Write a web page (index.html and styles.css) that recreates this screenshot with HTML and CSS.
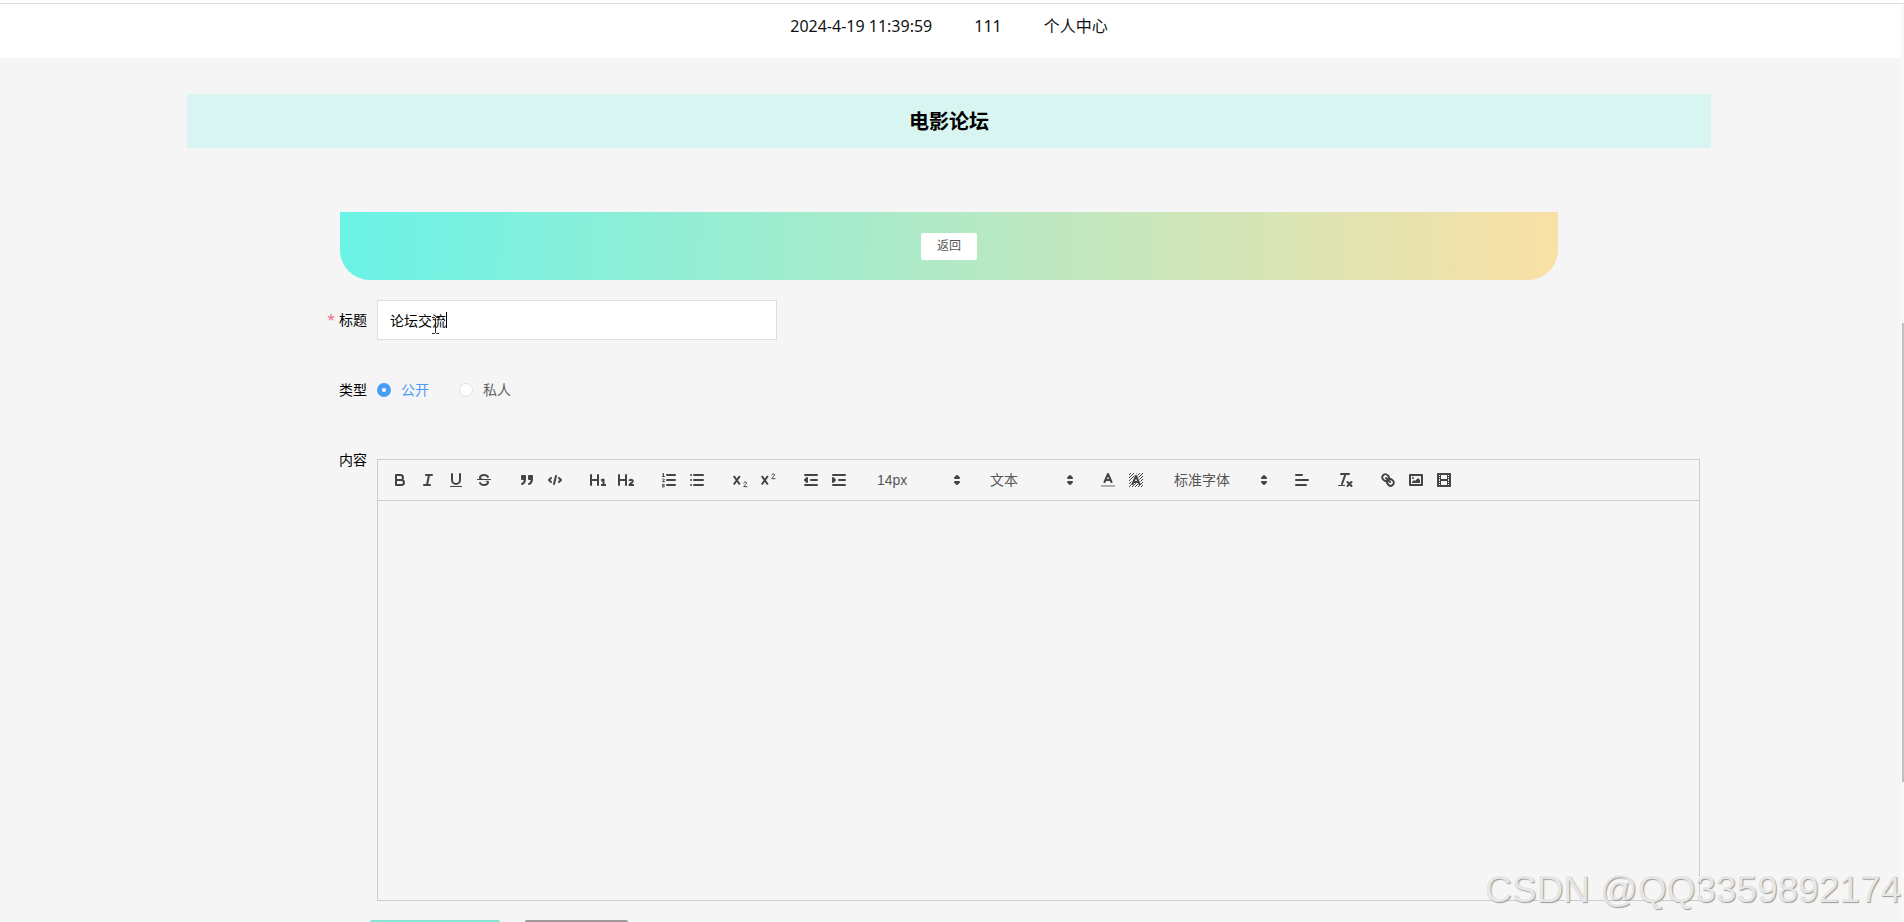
FILE: index.html
```html
<!DOCTYPE html>
<html lang="zh-CN">
<head>
<meta charset="utf-8">
<title>电影论坛</title>
<link rel="stylesheet" href="styles.css">
</head>
<body>
<header class="topbar">
  <span class="topbar-item">2024-4-19 11:39:59</span>
  <span class="topbar-item">111</span>
  <a class="topbar-item" href="#">个人中心</a>
</header>

<main class="page">
  <h1 class="page-title">电影论坛</h1>

  <div class="banner"><button class="back" type="button">返回</button></div>

  <form class="form">
    <div class="row">
      <label class="label required" for="title">标题</label>
      <div class="field">
        <input class="text" id="title" type="text" value="论坛交流">
        <span class="caret"></span>
        <svg class="pointer" viewBox="0 0 9 17"><path d="M1 .5h2.500l1 1 1-1H8M4.500 1.500v14M1 16.500h2.500l1-1 1 1H8"/></svg>
      </div>
    </div>

    <div class="row">
      <span class="label" id="kind">类型</span>
      <div class="radios" role="radiogroup" aria-labelledby="kind">
        <label class="radio"><input type="radio" name="kind" checked><span>公开</span></label>
        <label class="radio"><input type="radio" name="kind"><span>私人</span></label>
      </div>
    </div>

    <div class="row">
      <label class="label" for="content">内容</label>
      <div class="editor">
        <div class="toolbar">
          <div class="group">
            <button type="button" aria-label="粗体"><svg viewBox="0 0 18 18"><path class="s" d="M5 4h4.500a2.500 2.500 0 0 1 0 5H5zM5 9h5.500a2.500 2.500 0 0 1 0 5H5z"/></svg></button>
            <button type="button" aria-label="斜体"><svg viewBox="0 0 18 18"><path class="s" d="M7 4h6M5 14h6M8 14l2-10"/></svg></button>
            <button type="button" aria-label="下划线"><svg viewBox="0 0 18 18"><path class="s" d="M5 3v6a4 4 0 0 0 8 0V3"/><rect class="f" x="3" y="15" width="12" height="1"/></svg></button>
            <button type="button" aria-label="删除线"><svg viewBox="0 0 18 18"><path class="s t" d="M15.500 8.500h-13"/><path class="f" d="M9.007 8C6.542 7.791 6 7.519 6 6.500 6 5.792 7.283 5 9 5c1.571 0 2.765.679 2.969 1.309a1 1 0 0 0 1.900-.617C13.356 4.106 11.354 3 9 3 6.200 3 4 4.538 4 6.500a3.200 3.200 0 0 0 .5 1.843ZM8.984 10C11.457 10.208 12 10.479 12 11.500c0 .708-1.283 1.500-3 1.500-1.571 0-2.765-.679-2.969-1.309a1 1 0 1 0-1.900.617C4.644 13.894 6.646 15 9 15c2.800 0 5-1.538 5-3.500a3.200 3.200 0 0 0-.5-1.843Z"/></svg></button>
          </div>
          <div class="group">
            <button type="button" aria-label="引用"><svg viewBox="0 0 18 18"><rect class="f s" x="4" y="5" width="3" height="3"/><rect class="f s" x="11" y="5" width="3" height="3"/><path class="f s" d="M7 8c0 4.031-3 5-3 5M14 8c0 4.031-3 5-3 5"/></svg></button>
            <button type="button" aria-label="代码"><svg viewBox="0 0 18 18"><path class="s" d="M5 7 3 9l2 2M13 7l2 2-2 2M10 5l-2 8"/></svg></button>
          </div>
          <div class="group">
            <button type="button" aria-label="标题一"><svg viewBox="0 0 18 18"><path class="s" d="M2 4v10M9 4v10M9 9H2"/><path class="sb" d="M12 9.500 14.500 8.500V14M12 14h5"/></svg></button>
            <button type="button" aria-label="标题二"><svg viewBox="0 0 18 18"><path class="s" d="M2 4v10M9 4v10M9 9H2"/><path class="sb" d="M12.200 9.800c.6-1.300 3.600-1.400 3.600.4 0 1.500-2.900 2.200-3.400 3.800h4.600"/></svg></button>
          </div>
          <div class="group">
            <button type="button" aria-label="有序列表"><svg viewBox="0 0 18 18"><path class="s" d="M7 4h8M7 9h8M7 14h8"/><path class="s t" d="M2.500 5.500h2M3.500 5.500v-3L2.500 3M4.500 10.500h-2c0-.5 1.850-1 1.850-2 0-.7-1.200-.9-1.850-.3M2.500 14.600c.6-.2 1.900-.2 1.900-.9s-1.200-.8-1.900-.4M2.500 15.900c.8.300 2 .2 2-.6 0-.5-.4-.7-1-.7"/></svg></button>
            <button type="button" aria-label="无序列表"><svg viewBox="0 0 18 18"><path class="s" d="M6 4h9M6 9h9M6 14h9M3 4v0M3 9v0M3 14v0"/></svg></button>
          </div>
          <div class="group">
            <button type="button" aria-label="下标"><svg viewBox="0 0 18 18"><path class="sb" d="m2.800 5 6 8.500M8.800 5l-6 8.500"/><path class="s t" d="M12.800 11.900c.1-1.600 2.900-1.300 2.700.1-.1 1.200-2.300 1.900-2.700 3.700h3.200"/></svg></button>
            <button type="button" aria-label="上标"><svg viewBox="0 0 18 18"><path class="sb" d="m2.800 5 6 8.500M8.800 5l-6 8.500"/><path class="s t" d="M12.800 3.900c.1-1.600 2.900-1.300 2.700.1-.1 1.200-2.300 1.900-2.700 3.700h3.200"/></svg></button>
          </div>
          <div class="group">
            <button type="button" aria-label="减少缩进"><svg viewBox="0 0 18 18"><path class="s" d="M3 14h12M3 4h12M9 9h6"/><path class="f s" d="M5 7v4L3 9z"/></svg></button>
            <button type="button" aria-label="增加缩进"><svg viewBox="0 0 18 18"><path class="s" d="M3 14h12M3 4h12M9 9h6"/><path class="f s" d="M3 7v4l2-2z"/></svg></button>
          </div>
          <div class="group">
            <div class="picker"><select aria-label="字号"><option>14px</option></select><svg viewBox="0 0 18 18"><path class="f s" d="m7 11 2 2 2-2zM7 7l2-2 2 2z"/></svg></div>
          </div>
          <div class="group">
            <div class="picker"><select aria-label="段落"><option>文本</option></select><svg viewBox="0 0 18 18"><path class="f s" d="m7 11 2 2 2-2zM7 7l2-2 2 2z"/></svg></div>
          </div>
          <div class="group">
            <button type="button" aria-label="文字颜色"><svg viewBox="0 0 18 18"><path class="s pale" d="M2 15h14"/><path class="s" d="M5.500 11 9 3l3.500 8M11.630 9H6.380"/></svg></button>
            <button type="button" aria-label="背景颜色"><svg viewBox="0 0 18 18"><path class="hatch" d="M2 4l2-2M2 7l5-5M2 10l8-8M2 13 13 2M2 16 16 2M5 16 16 5M8 16l8-8M11 16l5-5M14 16l2-2"/><path class="halo" d="M6 12 9 6l3 6"/><path class="s" d="M5.500 13 9 5l3.500 8M11.630 11H6.380"/></svg></button>
          </div>
          <div class="group">
            <div class="picker wide"><select aria-label="字体"><option>标准字体</option></select><svg viewBox="0 0 18 18"><path class="f s" d="m7 11 2 2 2-2zM7 7l2-2 2 2z"/></svg></div>
          </div>
          <div class="group">
            <button type="button" aria-label="对齐"><svg viewBox="0 0 18 18"><path class="s" d="M3 9h12M3 14h10M3 4h6"/></svg></button>
          </div>
          <div class="group">
            <button type="button" aria-label="清除格式"><svg viewBox="0 0 18 18"><path class="s" d="M5 3h8M6 13 9.500 3M11.500 11l4 4M15.500 11l-4 4"/><rect class="f" x="2" y="14" width="7" height="1"/></svg></button>
          </div>
          <div class="group">
            <button type="button" aria-label="链接"><svg viewBox="0 0 18 18"><path class="s" d="m7 7 4 4"/><path class="s" d="M8.900 4.577a3.476 3.476 0 0 1 .36 4.679A3.476 3.476 0 0 1 4.577 8.900C3.185 7.500 2.035 6.400 4.217 4.217S7.500 3.185 8.900 4.577ZM13.423 9.100a3.476 3.476 0 0 0-4.679-.36 3.476 3.476 0 0 0 .36 4.679c1.392 1.392 2.500 2.542 4.679.36s1.032-3.287-.36-4.679Z"/></svg></button>
            <button type="button" aria-label="图片"><svg viewBox="0 0 18 18"><rect class="s" x="3" y="4" width="12" height="10"/><circle class="f" cx="6" cy="7" r="1"/><path class="f" d="M5 12v-1l2-2 1 1 3-3 2 2v3z"/></svg></button>
            <button type="button" aria-label="视频"><svg viewBox="0 0 18 18"><rect class="s" x="3" y="3" width="12" height="12"/><path class="f" d="M5 3h1v12H5zM12 3h1v12h-1zM5 8h8v2H5zM3 5h3v1H3zM3 7h3v1H3zM3 10h3v1H3zM3 12h3v1H3zM12 5h3v1h-3zM12 7h3v1h-3zM12 10h3v1h-3zM12 12h3v1h-3z"/></svg></button>
          </div>
        </div>
        <textarea class="content" id="content"></textarea>
      </div>
    </div>

    <div class="actions">
      <button class="submit" type="submit" aria-label="提交"></button>
      <button class="cancel" type="button" aria-label="取消"></button>
    </div>
  </form>
</main>

<div class="scrollbar"><div class="thumb"></div></div>
<div class="watermark">CSDN @QQ3359892174</div>
</body>
</html>
```
FILE: styles.css
```css
* {
  box-sizing: border-box;
}

body {
  position: relative;
  height: 100vh;
  margin: 0;
  padding-right: 6px;
  overflow: hidden;
  background: #f5f5f5;
  color: #000;
  font-family: "Noto Sans", "Noto Sans CJK SC", sans-serif;
  font-size: 14px;
}

button,
input,
select,
textarea {
  font: inherit;
}

.topbar {
  display: flex;
  justify-content: center;
  height: 58px;
  margin-right: -6px;
  padding: 3px 6px 0 0;
  background: linear-gradient(#ddd, #ddd) 0 3px / 100% 1px no-repeat #fff;
  font-size: 16px;
  line-height: 46px;
}

.topbar-item {
  padding: 0 21px;
  color: #111;
  text-decoration: none;
}

.page {
  margin: 36px 187px 0;
}

.page-title {
  margin: 0;
  padding-top: 2px;
  background: #d9f5f1;
  font-size: 20px;
  font-weight: 700;
  line-height: 52px;
  text-align: center;
}

.banner {
  display: flex;
  align-items: center;
  justify-content: center;
  height: 68px;
  margin: 64px 153px 0;
  border-radius: 0 0 30px 30px;
  background: linear-gradient(91deg, #6af3e7, #fae0a5);
}

.back {
  height: 27px;
  padding: 0 16px;
  border: 0;
  border-radius: 2px;
  background: #fff;
  color: #555;
  font-size: 12px;
  line-height: 26px;
}

.form {
  margin: 20px 11px 0 130px;
}

.row {
  display: flex;
  margin-bottom: 30px;
}

.label {
  flex: none;
  width: 60px;
  padding-right: 10px;
  line-height: 40px;
  text-align: right;
}

.required::before {
  content: "*";
  margin-right: 4px;
  color: #f56c8c;
}

.field {
  position: relative;
  width: 400px;
}

.text {
  display: block;
  width: 100%;
  height: 40px;
  padding: 0 12px;
  border: 1px solid #ddd;
  background: #fff;
  color: #000;
  outline: 0;
}

.caret {
  position: absolute;
  top: 12px;
  left: 69px;
  width: 1px;
  height: 16px;
  background: #000;
}

.pointer {
  position: absolute;
  top: 17px;
  left: 54px;
  width: 9px;
  height: 17px;
  fill: none;
  stroke: #222;
}

.radios {
  display: flex;
  gap: 30px;
}

.radio {
  display: flex;
  align-items: center;
  gap: 10px;
  color: #606266;
  line-height: 40px;
}

.radio input {
  appearance: none;
  width: 14px;
  height: 14px;
  margin: 0;
  border: 1px solid #e2e2e2;
  border-radius: 50%;
  background: #fff;
}

.radio input:checked {
  border: 5px solid #4a9cf5;
}

.radio input:checked + span {
  color: #4a9cf5;
}

.editor {
  flex: 1;
  min-width: 0;
  margin-top: 19px;
}

.toolbar {
  display: flex;
  flex-wrap: wrap;
  gap: 0 15px;
  padding: 8px;
  border: 1px solid #ccc;
}

.group {
  display: flex;
}

.group button {
  width: 28px;
  height: 24px;
  padding: 3px 5px;
  border: 0;
  background: none;
}

.group svg {
  display: block;
  width: 18px;
  height: 18px;
}

.s,
.sb {
  fill: none;
  stroke: #444;
  stroke-width: 2;
  stroke-linecap: round;
  stroke-linejoin: round;
}

.sb {
  stroke-linecap: butt;
}

.t {
  stroke-width: 1;
}

.f {
  fill: #444;
}

.pale {
  opacity: 0.4;
  stroke-linecap: butt;
}

.hatch {
  fill: none;
  stroke: #444;
  stroke-width: 1;
}

.halo {
  fill: #f5f5f5;
  stroke: #f5f5f5;
  stroke-width: 4;
}

.picker {
  position: relative;
  width: 98px;
  height: 24px;
}

.wide {
  width: 108px;
}

.picker select {
  appearance: none;
  width: 100%;
  height: 24px;
  padding: 0 20px 0 8px;
  border: 1px solid transparent;
  background: none;
  color: #555;
  font-family: "Liberation Sans", "Noto Sans CJK SC", sans-serif;
  line-height: 22px;
}

.picker svg {
  position: absolute;
  top: 3px;
  right: 0;
  pointer-events: none;
}

.content {
  display: block;
  width: 100%;
  height: 400px;
  padding: 12px 15px;
  border: 1px solid #ccc;
  border-top: 0;
  background: none;
  outline: 0;
  resize: none;
}

.actions {
  display: flex;
  gap: 25px;
  margin: -11px 0 0 53px;
}

.actions button {
  height: 40px;
  border: 0;
  border-radius: 2px;
}

.actions .submit {
  width: 130px;
  background: #85e3da;
}

.actions .cancel {
  width: 103px;
  background: #a09a9c;
}

.scrollbar {
  position: absolute;
  top: 4px;
  right: 0;
  bottom: 0;
  width: 3px;
  background: #f8f8f8;
}

.thumb {
  width: 2px;
  height: 50%;
  margin: 319px 0 0 1px;
  background: #c1c1c1;
}

.watermark {
  position: absolute;
  right: 3px;
  bottom: 11px;
  color: #e6e6e6;
  font-family: "Liberation Sans", Arial, sans-serif;
  font-size: 37px;
  line-height: 42px;
  text-shadow: 1px 1px 1px #999, -1px -1px 0 #fafafa;
}
```
